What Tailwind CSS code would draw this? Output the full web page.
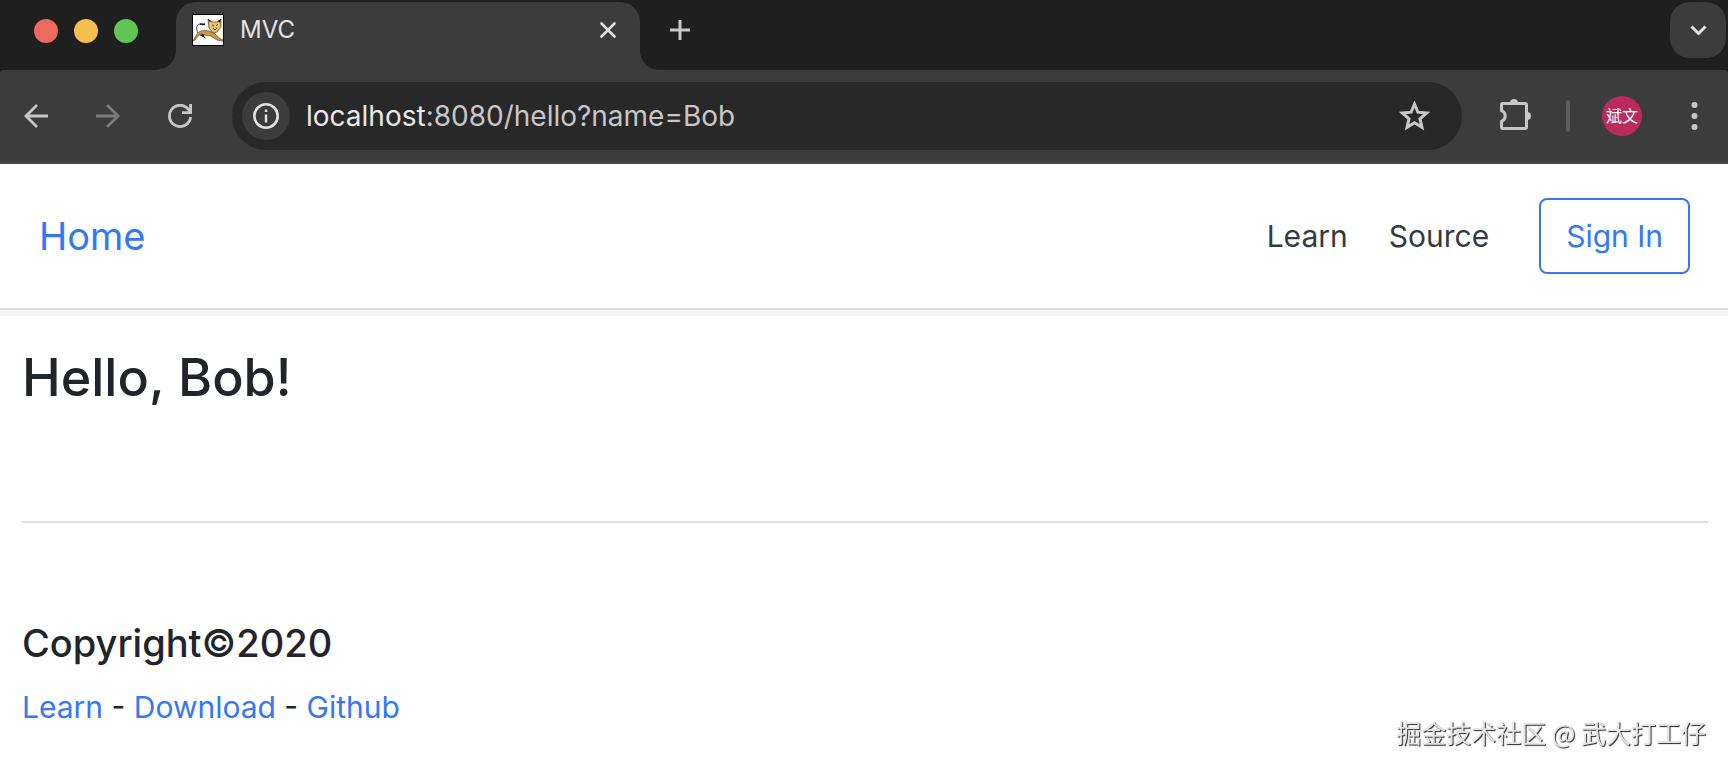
<!DOCTYPE html>
<html lang="en">

<head>
  <meta charset="UTF-8">
  <meta name="viewport" content="width=device-width, initial-scale=1.0">
  <title>MVC</title>
  <script src="https://cdn.jsdelivr.net/npm/@tailwindcss/browser@4"></script>
</head>

<body class="bg-white font-['Inter','Noto_Sans_CJK_SC',sans-serif] text-[#212529]">

  <!-- Browser window -->
  <div class="bg-[#1f1f1f]">
    <!-- Tab strip -->
    <div class="flex h-[70px] items-start pt-[2px] pr-[2px]">
      <div class="flex h-[58px] w-[160px] shrink-0 items-center gap-4 pl-[34px]">
        <button type="button" aria-label="Close window" class="size-6 rounded-full bg-[#ed6a5e]"></button>
        <button type="button" aria-label="Minimize window" class="size-6 rounded-full bg-[#f4bf4f]"></button>
        <button type="button" aria-label="Zoom window" class="size-6 rounded-full bg-[#61c554]"></button>
      </div>

      <!-- Active tab with flared feet -->
      <svg class="mt-[48px] h-5 w-4 shrink-0 overflow-visible fill-[#3c3c3c]" viewBox="0 0 16 20"><path d="M16 0V20H-6C8 20 16 11 16 0Z" /></svg>
      <div class="flex h-[68px] w-[464px] items-start rounded-t-[20px] bg-[#3c3c3c] pt-3 pr-6 pl-4">
        <svg class="size-8 shrink-0" viewBox="0 0 32 32">
          <rect x="0.5" y="0.5" width="31" height="31" fill="#fff" stroke="#000" />
          <path d="M6 19C3 14 5 9 10 10" fill="none" stroke="#444" stroke-width="1" />
          <path d="M8 10L13 10L11 11Z" fill="#111" stroke="#111" />
          <path d="M1 27L5 20C8 16 12 16 17 17L22 19L27 24L31 26V27L25 26L19 22L12 21L7 21L3 26Z" fill="#cf9440" stroke="#6b4b1e" stroke-width="0.7" />
          <path d="M8 21L14 25L11 20Z" fill="#111" />
          <path d="M16 5L20 8L25 8L29 5L29 13L25 18L21 19L17 14Z" fill="#e6c268" stroke="#4b3a1c" stroke-width="0.7" />
          <path d="M16 5L19 7L17 8ZM29 5L26 7L28 9Z" fill="#111" />
          <path d="M20 11L22 12M26 10L24 12M21 14L23 16L25 14" fill="none" stroke="#554018" stroke-width="0.9" />
        </svg>
        <span class="ml-4 flex-1 text-[24px] leading-8 text-[#e3e3e3]">MVC</span>
        <button type="button" aria-label="Close tab" class="mt-2">
          <svg class="size-4" viewBox="0 0 16 16"><path d="M1.5 1.5L14.5 14.5M14.5 1.5L1.5 14.5" stroke="#e3e3e3" stroke-width="2.6" stroke-linecap="round" /></svg>
        </button>
      </div>
      <svg class="mt-[48px] h-5 w-5 shrink-0 fill-[#3c3c3c]" viewBox="0 0 20 20"><path d="M0 0V20H20C8 20 0 11 0 0Z" /></svg>

      <button type="button" aria-label="New tab" class="mt-[18px] ml-[10px]">
        <svg class="size-5" viewBox="0 0 20 20"><path d="M10 0V20M0 10H20" stroke="#c7c7c7" stroke-width="3" /></svg>
      </button>
      <button type="button" aria-label="Search tabs" class="ml-auto flex size-14 items-center justify-center rounded-[20px] bg-[#3c3c3c]">
        <svg class="h-[11px] w-[17px]" viewBox="0 0 17 11"><path d="M1.5 1.5L8.5 8.5L15.5 1.5" fill="none" stroke="#e3e3e3" stroke-width="3" /></svg>
      </button>
    </div>

    <!-- Toolbar -->
    <div class="flex h-[94px] items-center rounded-t-[4px] border-b-2 border-[#454545] bg-[#3c3c3c] pr-[30px] pl-6">
      <button type="button" aria-label="Back">
        <svg class="size-6" viewBox="0 0 24 24"><path d="M24 12H2M13 1L2 12L13 23" fill="none" stroke="#c7c7c7" stroke-width="2.8" /></svg>
      </button>
      <button type="button" aria-label="Forward" class="ml-12">
        <svg class="size-6" viewBox="0 0 24 24"><path d="M0 12H22M11 1L22 12L11 23" fill="none" stroke="#7c7c7c" stroke-width="2.8" /></svg>
      </button>
      <button type="button" aria-label="Reload" class="ml-12">
        <svg class="size-6" viewBox="0 0 24 24"><path d="M22.6 13A10.6 10.6 0 1 1 20.5 5.5L22.7 8.6M22.6 0V8.6H14" fill="none" stroke="#c7c7c7" stroke-width="2.8" /></svg>
      </button>

      <div class="ml-10 flex h-[68px] flex-1 items-center rounded-full bg-[#282828] pr-8 pl-[10px]">
        <button type="button" aria-label="Site information" class="flex size-12 items-center justify-center rounded-full bg-[#3c3c3c]">
          <svg class="size-[26px]" viewBox="0 0 26 26"><circle cx="13" cy="13" r="11.7" fill="none" stroke="#e3e3e3" stroke-width="2.6" /><path d="M13 11.5V19.5M13 6.5V9" stroke="#e3e3e3" stroke-width="2.4" /></svg>
        </button>
        <a href="#" class="ml-4 flex-1 text-[28px] leading-9 text-[#c7c7c7]"><span class="text-[#e8e8e8]">localhost</span>:8080/hello?name=Bob</a>
        <button type="button" aria-label="Bookmark this page">
          <svg class="h-[30px] w-[31px]" viewBox="0 0 31 30"><path d="M15.5 3L18.9 11.2L27.6 12L21 17.8L23 26.4L15.5 21.8L8 26.4L10 17.8L3.4 12L12.1 11.2Z" fill="none" stroke="#c7c7c7" stroke-width="3" /></svg>
        </button>
      </div>

      <button type="button" aria-label="Extensions" class="mb-1 ml-[38px]">
        <svg class="size-8" viewBox="0 0 32 32">
          <path d="M3 5.5H25Q26.5 5.5 26.5 7V29Q26.5 30.5 25 30.5H3Q1.5 30.5 1.5 29V23.5C6.5 21 6.5 15 1.5 12.5V7Q1.5 5.5 3 5.5Z" fill="none" stroke="#c7c7c7" stroke-width="3" />
          <path d="M10 5A4 4 0 0 1 18 5ZM27 14A4 4 0 0 1 27 22Z" fill="#c7c7c7" />
        </svg>
      </button>
      <span class="ml-[34px] h-8 w-1 rounded-sm bg-[#5e5e5e]"></span>
      <button type="button" class="ml-8 size-10 rounded-full bg-[#b92b5d] text-[16px] leading-10 whitespace-nowrap text-white">斌文</button>
      <button type="button" aria-label="Menu" class="ml-[49px]">
        <svg class="h-7 w-[7px] fill-[#c7c7c7]" viewBox="0 0 7 28"><circle cx="3.5" cy="3" r="3" /><circle cx="3.5" cy="14" r="3" /><circle cx="3.5" cy="25" r="3" /></svg>
      </button>
    </div>
  </div>

  <!-- Navbar -->
  <header class="flex items-center border-b-2 border-[#dedede] py-[34px] pr-[38px] pl-[39px] shadow-[0_6px_0_#f4f4f4]">
    <a href="#" class="mr-auto text-[38px] leading-[48px] text-[#3478f6]">Home</a>
    <nav class="mr-[50px] flex gap-[41px] text-[30px] leading-[48px] text-[#343a40]">
      <a href="#">Learn</a>
      <a href="#">Source</a>
    </nav>
    <a href="#" class="rounded-lg border-2 border-[#3478f6] px-[25px] py-3 text-[30px] leading-[48px] text-[#3478f6]">Sign In</a>
  </header>

  <!-- Content -->
  <main class="px-[22px] pt-[34px]">
    <h1 class="text-[52px] leading-[67px] font-medium">Hello, Bob!</h1>
  </main>

  <!-- Footer -->
  <footer class="mt-[110px] mr-5 ml-[22px] border-t-2 border-[#dedede] pt-24">
    <h5 class="text-[38px] leading-[48px] font-medium">Copyright©2020</h5>
    <p class="mt-4 text-[30px] leading-[48px]">
      <a href="#" class="text-[#3478f6]">Learn</a> -
      <a href="#" class="text-[#3478f6]">Download</a> -
      <a href="#" class="text-[#3478f6]">Github</a>
    </p>
  </footer>

  <!-- Watermark -->
  <div class="fixed right-[22px] bottom-5 font-['Noto_Sans_CJK_SC',sans-serif] text-[25px] leading-9 text-[#e4e4e4] [text-shadow:1px_1px_1px_#222]">掘金技术社区 @ 武大打工仔</div>

</body>

</html>
